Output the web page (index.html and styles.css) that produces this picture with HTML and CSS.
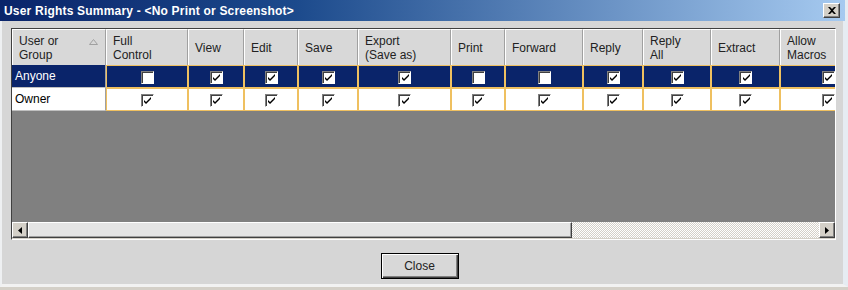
FILE: index.html
```html
<!DOCTYPE html>
<html lang="en">
<head>
  <meta charset="UTF-8" />
  <title>User Rights Summary</title>
  <link rel="stylesheet" href="styles.css">
</head>
<body>
  <svg width="0" height="0" class="defs">
    <symbol id="tick" viewBox="0 0 9 9">
      <path d="M1 4 L3 6 L8 1 L8 3 L3 8 L1 6 Z" fill="#000"/>
    </symbol>
  </svg>

  <div class="window">
    <div class="titlebar">
      <span class="title">User Rights Summary - &lt;No Print or Screenshot&gt;</span>
      <button class="close-x">
        <svg width="8" height="7" viewBox="0 0 8 7"><path d="M0 0 L2 0 L4 2 L6 0 L8 0 L5 3.5 L8 7 L6 7 L4 5 L2 7 L0 7 L3 3.5 Z" fill="#000"/></svg>
      </button>
    </div>

    <div class="content">
      <div class="grid">
        <div class="viewport">
          <table class="rights">
            <colgroup>
              <col style="width:94px"><col style="width:82px"><col style="width:56px"><col style="width:54px">
              <col style="width:60px"><col style="width:93px"><col style="width:54px"><col style="width:78px">
              <col style="width:60px"><col style="width:68px"><col style="width:69px"><col style="width:96px">
            </colgroup>
            <thead>
              <tr>
                <th class="sortable">User or<br>Group
                  <svg class="sort" width="9" height="6" viewBox="0 0 9 6"><path d="M0.5 5.5 L4.5 0.5 L8.5 5.5 Z" fill="none" stroke="#a0a0a0"/></svg>
                </th>
                <th>Full<br>Control</th>
                <th>View</th>
                <th>Edit</th>
                <th>Save</th>
                <th>Export<br>(Save as)</th>
                <th>Print</th>
                <th>Forward</th>
                <th>Reply</th>
                <th>Reply<br>All</th>
                <th>Extract</th>
                <th>Allow<br>Macros</th>
              </tr>
            </thead>
            <tbody id="rows"></tbody>
          </table>
        </div>
        <div class="hscroll">
          <span class="arrow"><svg width="4" height="7" viewBox="0 0 4 7"><path d="M4 0 L0 3.5 L4 7 Z"/></svg></span>
          <span class="thumb"></span>
          <span class="track"></span>
          <span class="arrow"><svg width="4" height="7" viewBox="0 0 4 7"><path d="M0 0 L4 3.5 L0 7 Z"/></svg></span>
        </div>
      </div>

      <div class="actions">
        <button class="btn">Close</button>
      </div>
    </div>
  </div>

  <script>
    const rights = [
      { who: 'Anyone', selected: true,  values: [0, 1, 1, 1, 1, 0, 0, 1, 1, 1, 1] },
      { who: 'Owner',  selected: false, values: [1, 1, 1, 1, 1, 1, 1, 1, 1, 1, 1] }
    ];

    const body = document.getElementById('rows');
    rights.forEach(r => {
      const tr = document.createElement('tr');
      if (r.selected) tr.className = 'selected';
      let html = '<td class="who">' + r.who + '</td>';
      r.values.forEach(v => {
        html += '<td class="cell"><span class="box">' +
          (v ? '<svg width="9" height="9"><use href="#tick"/></svg>' : '') +
          '</span></td>';
      });
      tr.innerHTML = html;
      body.appendChild(tr);
    });
  </script>
</body>
</html>
```

FILE: styles.css
```css
body {
  margin: 0;
  width: 848px;
  height: 290px;
  overflow: hidden;
  background: #d4d0c8;
  font-family: "Liberation Sans", Arial, sans-serif;
  font-size: 12px;
}
.defs {
  position: absolute;
}
.window {
  height: 287px;
  border-left: 2px solid #eef0f2;
  border-right: 5px solid #e6ecf2;
  border-bottom: 3px solid #f2f2f2;
  box-sizing: border-box;
  width: 848px;
  background: #d6d6d6;
}
.titlebar {
  height: 21px;
  margin-left: -2px;
  margin-right: -2px;
  background: linear-gradient(to right, #0a246a 0%, #1c4a8c 35%, #a6caf0 100%);
  display: flex;
  align-items: center;
  justify-content: space-between;
  padding: 0 5px 0 4px;
}
.title {
  color: #fff;
  font-weight: bold;
  font-size: 12px;
  letter-spacing: 0.2px;
}
.close-x {
  width: 17px;
  height: 15px;
  padding: 0;
  background: #d4d0c8;
  border: 1px solid;
  border-color: #fff #404040 #404040 #fff;
  box-shadow: inset -1px -1px 0 #808080;
  display: flex;
  align-items: center;
  justify-content: center;
}
.content {
  padding: 7px 0 0 9px;
}
.grid {
  width: 825px;
  height: 212px;
  box-sizing: border-box;
  border: 1px solid;
  border-color: #404040 #fff #fff #404040;
  background: #808080;
  display: flex;
  flex-direction: column;
}
.viewport {
  flex: 1;
  overflow: hidden;
}
.rights {
  table-layout: fixed;
  border-collapse: separate;
  border-spacing: 0;
  width: 864px;
}
.rights th {
  height: 36px;
  box-sizing: border-box;
  background: #d8d8d8;
  font-weight: normal;
  text-align: left;
  padding: 1px 5px 0 6px;
  line-height: 14px;
  border-right: 1px solid #a0a0a0;
  border-left: 1px solid #fff;
  border-top: 1px solid #fff;
  color: #222;
  vertical-align: middle;
}
.rights th.sortable {
  position: relative;
  padding-left: 6px;
}
.sort {
  position: absolute;
  right: 7px;
  top: 9px;
}
.rights td {
  height: 23px;
  box-sizing: border-box;
  background: #fff;
  padding: 0;
}
.who {
  padding-left: 3px !important;
  border-right: 1px solid #a0a0a0;
  border-bottom: 1px solid #c0c0c0;
  color: #000;
}
.cell {
  border: 1px solid #efc060;
  text-align: center;
  vertical-align: middle;
}
.selected td {
  background: #0a246a;
}
.selected .who {
  color: #fff;
}
.box {
  display: inline-flex;
  align-items: center;
  justify-content: center;
  width: 13px;
  height: 13px;
  box-sizing: border-box;
  background: #fff;
  border: 1px solid;
  border-color: #808080 #fff #fff #808080;
  box-shadow: inset 1px 1px 0 #404040;
  vertical-align: middle;
  padding: 1px 0 0 1px;
}
.hscroll {
  height: 17px;
  display: flex;
  background: #d4d0c8;
}
.arrow {
  width: 16px;
  height: 16px;
  box-sizing: border-box;
  background: #d4d0c8;
  border: 1px solid;
  border-color: #fff #404040 #404040 #fff;
  box-shadow: inset -1px -1px 0 #808080;
  display: flex;
  align-items: center;
  justify-content: center;
}
.thumb {
  width: 544px;
  height: 16px;
  box-sizing: border-box;
  background: #e4e4e4;
  border: 1px solid;
  border-color: #fff #404040 #404040 #fff;
  box-shadow: inset -1px -1px 0 #a0a0a0;
}
.track {
  flex: 1;
  height: 16px;
  background-color: #f0f0f0;
  background-image: repeating-conic-gradient(#d4d0c8 0 25%, #ffffff 0 50%);
  background-size: 2px 2px;
}
.actions {
  display: flex;
  justify-content: center;
  padding: 13px 0 0 0;
}
.btn {
  width: 78px;
  height: 26px;
  margin-left: -15px;
  font-family: "Liberation Sans", Arial, sans-serif;
  font-size: 12px;
  color: #222;
  background: #d8d8d8;
  border: 1px solid #000;
  box-shadow: inset 1px 1px 0 #fff, inset -1px -1px 0 #404040, inset -2px -2px 0 #808080;
}
```
